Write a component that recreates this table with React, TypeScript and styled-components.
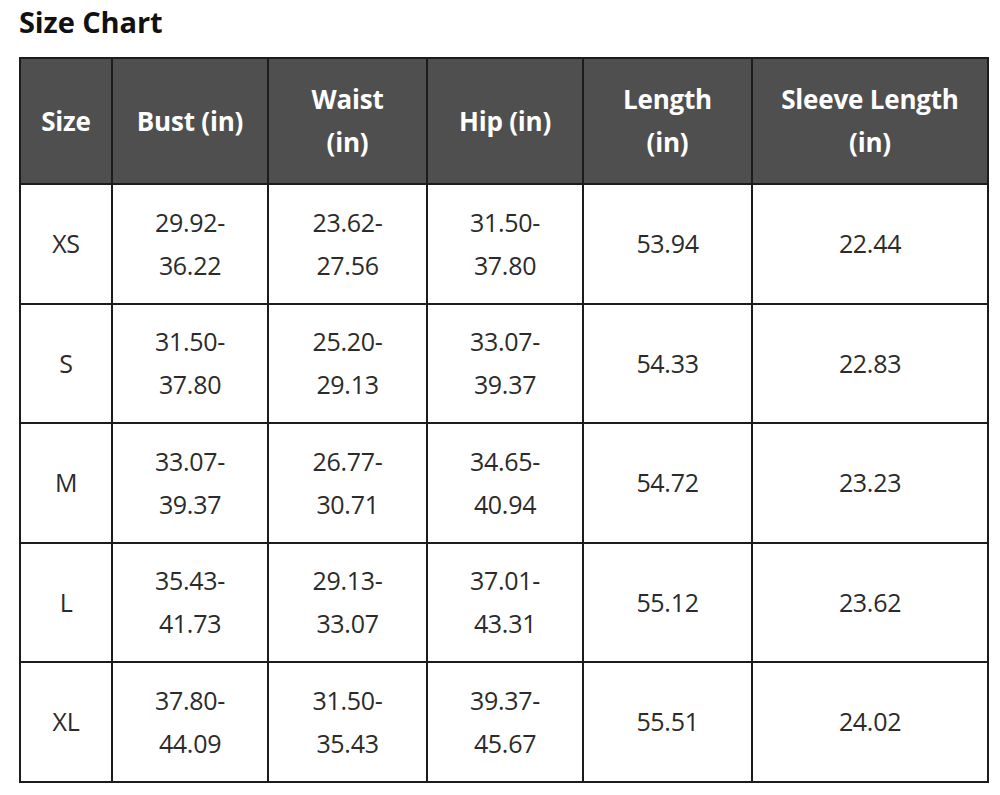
import React from "react";
import styled, { createGlobalStyle } from "styled-components";

interface SizeRow {
  size: string;
  bust: string[];
  waist: string[];
  hip: string[];
  length: string;
  sleeve: string;
}

const rows: SizeRow[] = [
  { size: "XS", bust: ["29.92-", "36.22"], waist: ["23.62-", "27.56"], hip: ["31.50-", "37.80"], length: "53.94", sleeve: "22.44" },
  { size: "S", bust: ["31.50-", "37.80"], waist: ["25.20-", "29.13"], hip: ["33.07-", "39.37"], length: "54.33", sleeve: "22.83" },
  { size: "M", bust: ["33.07-", "39.37"], waist: ["26.77-", "30.71"], hip: ["34.65-", "40.94"], length: "54.72", sleeve: "23.23" },
  { size: "L", bust: ["35.43-", "41.73"], waist: ["29.13-", "33.07"], hip: ["37.01-", "43.31"], length: "55.12", sleeve: "23.62" },
  { size: "XL", bust: ["37.80-", "44.09"], waist: ["31.50-", "35.43"], hip: ["39.37-", "45.67"], length: "55.51", sleeve: "24.02" },
];

const columns = [92, 156, 159, 156, 169, 236];

const GlobalStyle = createGlobalStyle`
  body {
    margin: 0;
    background: #ffffff;
    font-family: "Open Sans", "Noto Sans", sans-serif;
  }
`;

const Page = styled.div`
  padding: 0 13px 0 19px;
`;

const Title = styled.h2`
  margin: 0;
  padding-top: 2px;
  height: 55px;
  font-size: 29px;
  line-height: 40px;
  font-weight: 700;
  color: #111111;
  letter-spacing: -0.1px;
`;

const Table = styled.table`
  border-collapse: collapse;
  table-layout: fixed;
  width: 968px;
  color: #2b2b2b;
`;

const HeadCell = styled.th`
  height: 124px;
  padding: 0 4px;
  background: #4f4f4f;
  color: #ffffff;
  border: 2px solid #1c1c1c;
  font-size: 26px;
  font-weight: 700;
  line-height: 43px;
  text-align: center;
  letter-spacing: -0.2px;
`;

const Cell = styled.td`
  height: 117.5px;
  padding: 0 4px;
  border: 2px solid #1c1c1c;
  font-size: 25px;
  line-height: 43px;
  text-align: center;
  letter-spacing: -0.3px;
`;

const Lines = ({ parts }: { parts: string[] }) => (
  <>
    {parts.map((p, i) => (
      <React.Fragment key={i}>
        {i > 0 && <br />}
        {p}
      </React.Fragment>
    ))}
  </>
);

export default function App() {
  return (
    <Page>
      <GlobalStyle />
      <Title>Size Chart</Title>
      <Table>
        <colgroup>
          {columns.map((w, i) => (
            <col key={i} style={{ width: w }} />
          ))}
        </colgroup>
        <thead>
          <tr>
            <HeadCell>Size</HeadCell>
            <HeadCell>Bust (in)</HeadCell>
            <HeadCell>
              Waist
              <br />
              (in)
            </HeadCell>
            <HeadCell>Hip (in)</HeadCell>
            <HeadCell>
              Length
              <br />
              (in)
            </HeadCell>
            <HeadCell>
              Sleeve Length
              <br />
              (in)
            </HeadCell>
          </tr>
        </thead>
        <tbody>
          {rows.map((r) => (
            <tr key={r.size}>
              <Cell>{r.size}</Cell>
              <Cell>
                <Lines parts={r.bust} />
              </Cell>
              <Cell>
                <Lines parts={r.waist} />
              </Cell>
              <Cell>
                <Lines parts={r.hip} />
              </Cell>
              <Cell>{r.length}</Cell>
              <Cell>{r.sleeve}</Cell>
            </tr>
          ))}
        </tbody>
      </Table>
    </Page>
  );
}
